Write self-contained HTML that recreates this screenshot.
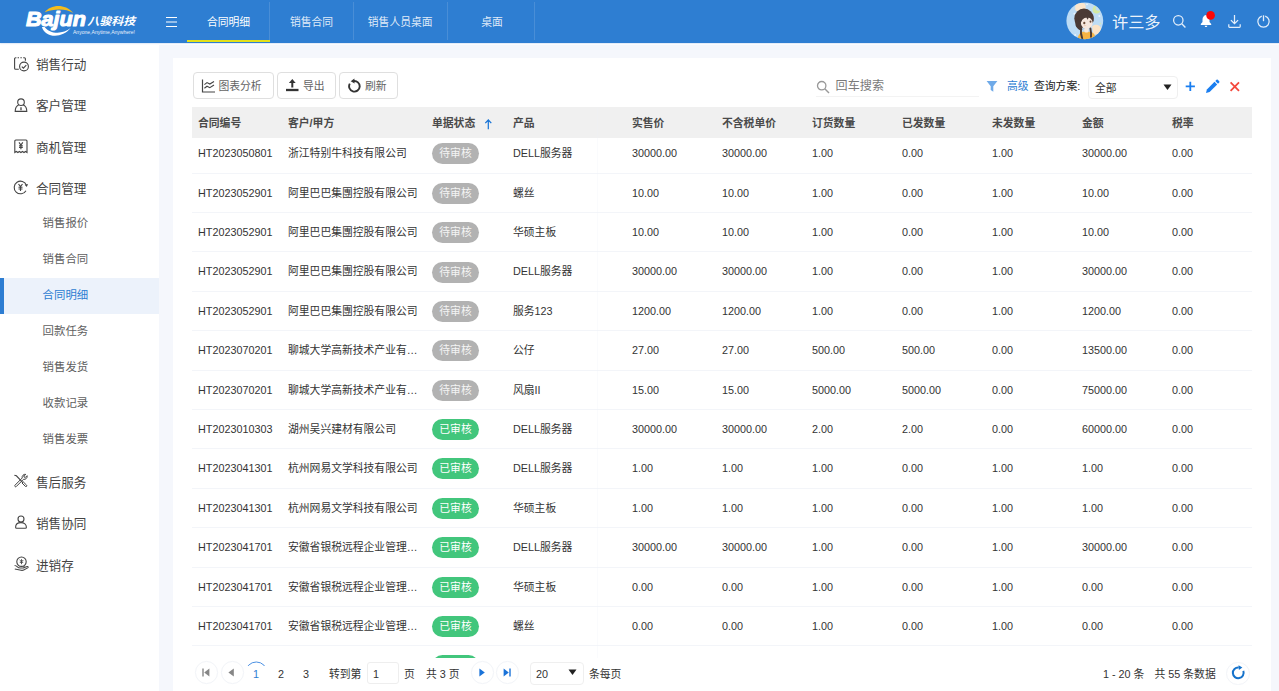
<!DOCTYPE html>
<html lang="zh-CN">
<head>
<meta charset="utf-8">
<title>合同明细</title>
<style>
*{box-sizing:border-box;margin:0;padding:0}
html,body{width:1279px;height:691px;overflow:hidden;background:#fff}
body{font-family:"Liberation Sans","Noto Sans CJK SC",sans-serif;font-size:10.8px;color:#333;position:relative}
.abs{position:absolute}
#hd{position:absolute;left:0;top:0;width:1279px;height:43.300px;background:#2e7ed2;box-shadow:0 .5px 1.500px rgba(40,110,200,.35);z-index:5}
.tab{position:absolute;top:0;height:43px;line-height:44.200px;text-align:center;color:rgba(255,255,255,.86);font-size:10.8px}
.tab.on{color:#fff}
.sep{position:absolute;top:2px;width:1px;height:38px;background:rgba(255,255,255,.13)}
#sb{position:absolute;left:0;top:43px;width:159px;height:648px;background:#fff}
.mi{position:absolute;left:36px;font-size:12.6px;color:#444;line-height:20px;height:20px;white-space:nowrap}
.si{position:absolute;left:42.600px;font-size:11.400px;color:#606060;line-height:20px;height:20px;white-space:nowrap}
.ico{position:absolute}
#ct{position:absolute;left:159px;top:44.600px;width:1120px;height:647px;background:#f5f7fc}
#pn{position:absolute;left:173.200px;top:58px;width:1097.900px;height:633px;background:#fff}
.btn{position:absolute;top:72px;height:27px;border:1px solid #dfdfdf;border-radius:4px;background:#fff;font-size:10.8px;color:#636363;line-height:27px;white-space:nowrap}
#th{position:absolute;left:192px;top:107px;width:1060px;height:31px;background:#f0f0f0}
#th span{position:absolute;top:0;line-height:33.600px;font-weight:bold;font-size:10.8px;color:#4a4a4a;white-space:nowrap}
#tb{position:absolute;left:192px;top:138px;width:1060px;height:520px;overflow:hidden}
#tbi{position:absolute;left:0;top:-3.7px;width:1060px}
.tr{position:relative;height:39.4px;border-bottom:1px solid #f3f5f9;white-space:nowrap}
.c{position:absolute;top:0;height:39.4px;line-height:39.6px;padding:0 6px;overflow:hidden;text-overflow:ellipsis;white-space:nowrap;font-size:10.8px;color:#333}
.c1{left:0;width:90px}.c2{left:90px;width:144px}.c3{left:234px;width:81px}.c4{left:315px;width:90px}.c5{left:405px;width:29px}.cn{width:90px}
.bd{display:inline-block;height:21px;line-height:21px;border-radius:11px;padding:0 7.3px;color:#fff;font-size:10.8px;vertical-align:middle;position:relative;top:-0.6px}
.bd.w{background:#b2b2b2;color:#f4f4f4}.bd.d{background:#42c67c}
#pg{position:absolute;left:174px;top:658px;width:1097px;height:33px;background:#fff}
.pt{position:absolute;top:663.500px;height:20px;line-height:20px;font-size:10.8px;color:#333;white-space:nowrap}
.cb{position:absolute;width:22.5px;height:22.5px;border:1px solid #f2f4f8;border-radius:50%;background:#fff}
</style>
</head>
<body>
<div id="hd">
  <svg class="abs" style="left:0;top:0" width="160" height="43" viewBox="0 0 160 43">
    <path d="M44.800 12.200C50 5.500 64 2.500 73.200 13C66 8.300 54 8.500 44.800 12.200Z" fill="#f5bd1b"/>
    <path d="M41.900 26.900C45 38 62 39 70.600 28.100C63 34.500 50 34.500 44.600 27Z" fill="#fff"/>
    <text x="26" y="25.6" font-family="Liberation Sans, sans-serif" font-weight="bold" font-style="italic" font-size="21" fill="#fff" stroke="#fff" stroke-width="1.1" stroke-linejoin="round" textLength="60" lengthAdjust="spacingAndGlyphs">Bajun</text>
    <text x="87.300" y="24.600" font-family="Noto Sans CJK SC, sans-serif" font-weight="bold" font-style="italic" font-size="10.800" fill="#fff" textLength="48" lengthAdjust="spacingAndGlyphs">八骏科技</text>
    <text x="73" y="33.8" font-family="Liberation Sans, sans-serif" font-size="4.6" fill="#e8f0fb" textLength="62" lengthAdjust="spacingAndGlyphs">Anyone,Anytime,Anywhere!</text>
  </svg>
  <svg class="abs" style="left:164.800px;top:15.500px" width="13" height="12" viewBox="0 0 13 12"><path d="M1 1.5h11M1 6h11M1 10.5h11" stroke="#fff" stroke-width="1.1" fill="none"/></svg>
  <div class="tab on" style="left:187px;width:83px">合同明细</div>
  <div class="abs" style="left:187px;top:40px;width:83px;height:2px;background:#e4e11a"></div>
  <div class="sep" style="left:269.400px"></div>
  <div class="tab" style="left:270px;width:83px">销售合同</div>
  <div class="sep" style="left:353px"></div>
  <div class="tab" style="left:353px;width:94.400px">销售人员桌面</div>
  <div class="sep" style="left:447.400px"></div>
  <div class="tab" style="left:448px;width:88px">桌面</div>
  <div class="sep" style="left:534px"></div>
  <!-- avatar -->
  <svg class="abs" style="left:1065.900px;top:1.900px" width="38" height="38" viewBox="0 0 38 38">
    <defs><clipPath id="av"><circle cx="18.8" cy="18.8" r="18.4"/></clipPath></defs>
    <g clip-path="url(#av)">
      <rect width="38" height="38" fill="#bddcf5"/>
      <circle cx="21" cy="2.300" r=".9" fill="#eaf4fc"/><circle cx="8.500" cy="11.800" r="1" fill="#eaf4fc"/><circle cx="33.400" cy="14" r="1" fill="#eaf4fc"/><circle cx="9.200" cy="33" r=".9" fill="#eaf4fc"/><circle cx="34.300" cy="21.500" r=".8" fill="#d6eeb4"/>
      <circle cx="30.500" cy="7.600" r="3.900" fill="#d3eaa2"/><circle cx="32.300" cy="6" r="2.700" fill="#bddcf5"/>
      <rect x="9.200" y="1" width="10.400" height="8.400" rx="3" fill="#fbe6cd"/>
      <path d="M26 24.500c2-2.200 6-2.400 8.200.200 1.600 2 .800 5.600-1.600 7.400l-5 .600z" fill="#fbe3c6"/>
      <path d="M11.600 38c.200-4.400 2.200-7.600 5.400-8.200h7.200c3.200.400 5 3.200 5.200 6.400L26 38z" fill="#f6b445"/>
      <rect x="18.300" y="26" width="4.200" height="4.600" rx="1.500" fill="#f7e9de"/>
      <ellipse cx="18" cy="16.400" rx="9.700" ry="9.800" fill="#4a3a35"/>
      <path d="M9.500 19c-.800 4 .800 7.400 4.600 9.200l2.400-.6-3-9z" fill="#4a3a35"/>
      <ellipse cx="20.800" cy="21" rx="5.900" ry="5.900" fill="#f6e8df"/>
      <path d="M12 15c3-5 11-6.400 15.400-.600l.200 5.600c-1.400-2.800-3-4-5-4.400l-.800 2.200-1.600-2.400c-3 .400-5 2.600-5.600 6.600l-2.200-1z" fill="#4a3a35"/>
      <ellipse cx="18.300" cy="21" rx="1.100" ry="1.300" fill="#6b4c3a"/><ellipse cx="24.500" cy="19.600" rx=".9" ry="1.200" fill="#6b4c3a"/>
      <ellipse cx="19" cy="23.600" rx="1.300" ry=".6" fill="#f4cdb5"/>
      <path d="M15 26.600c-.400 3.400 0 6.600 1.200 9.800M24.400 26.400c.600 2.800.800 5.600.600 8.400" stroke="#4a3a35" stroke-width="1.900" fill="none" stroke-linecap="round"/>
    </g>
  </svg>
  <div class="abs" style="left:1112px;top:9.600px;height:24px;line-height:24px;font-size:16.200px;color:rgba(255,255,255,.93);white-space:nowrap">许三多</div>
  <svg class="abs" style="left:1172px;top:14px" width="15" height="15" viewBox="0 0 15 15"><circle cx="6.300" cy="6.300" r="4.700" fill="none" stroke="#e3eefa" stroke-width="1.250"/><path d="M9.800 9.800L13.400 13.400" stroke="#e3eefa" stroke-width="1.350"/></svg>
  <svg class="abs" style="left:1199px;top:10px" width="18" height="20" viewBox="0 0 18 20"><path d="M7 5c-2.300.500-3.500 2.300-3.500 4.700v2.200L1.800 14v.900h10.400V14l-1.700-2.100V9.700c0-2.400-1.200-4.200-3.500-4.700z" fill="#fff"/><path d="M5.700 15.700h2.600c0 .800-.600 1.300-1.300 1.300s-1.300-.500-1.300-1.300z" fill="#fff"/><circle cx="11.600" cy="5.400" r="4.300" fill="#fb0606"/></svg>
  <svg class="abs" style="left:1227px;top:14px" width="15" height="15" viewBox="0 0 15 15"><path d="M7.500 1v8.600M3.900 6.100l3.600 3.600 3.600-3.600M1.800 10.200v2.400a.8.800 0 0 0 .8.800h9.800a.8.800 0 0 0 .8-.8v-2.400" fill="none" stroke="#e3eefa" stroke-width="1.250"/></svg>
  <svg class="abs" style="left:1256px;top:14px" width="15" height="15" viewBox="0 0 15 15"><path d="M5.800 2.100a5.700 5.700 0 1 0 3.400 0" fill="none" stroke="#e3eefa" stroke-width="1.250"/><path d="M7.500 1.300v5.900" stroke="#e3eefa" stroke-width="1.300"/></svg>
</div>

<div id="sb">
  <div class="abs" style="left:0;top:235px;width:159px;height:36px;background:#ecf2fb"></div>
  <div class="abs" style="left:0;top:235px;width:3.600px;height:36px;background:#2d7dd2"></div>
  <!-- icons -->
  <svg class="ico" style="left:13px;top:11.500px" width="17" height="17" viewBox="0 0 17 17"><path d="M5.800 14.200H2.600a1 1 0 0 1-1-1V3.800a1 1 0 0 1 1-1h.800" fill="none" stroke="#444" stroke-width="1.100"/><path d="M4.600 2.800h1.400M7.400 2.800h1.400M10.200 2.800h1.200a1 1 0 0 1 1 1v2" fill="none" stroke="#444" stroke-width="1.100"/><circle cx="11" cy="11.500" r="4.400" fill="#fff" stroke="#444" stroke-width="1.100"/><path d="M8.800 11.600l1.600 1.600 2.900-3.100" fill="none" stroke="#444" stroke-width="1.100"/></svg>
  <svg class="ico" style="left:13px;top:54px" width="17" height="17" viewBox="0 0 17 17"><circle cx="8" cy="5.200" r="3.300" fill="none" stroke="#444" stroke-width="1.100"/><path d="M5.800 7.800C3.400 9 2.200 11.400 2.200 14.400h11.600c0-3-1.200-5.400-3.600-6.600" fill="none" stroke="#444" stroke-width="1.100"/><path d="M8 10.200v3" stroke="#444" stroke-width="1.300"/></svg>
  <svg class="ico" style="left:13px;top:94.700px" width="17" height="17" viewBox="0 0 17 17"><path d="M1.800 14.500V3a1 1 0 0 1 1-1h10.200a1 1 0 0 1 1 1v11.500l-1.500-1-1.500 1-1.550-1-1.550 1-1.550-1-1.500 1-1.550-1z" fill="none" stroke="#444" stroke-width="1.100"/><path d="M6 4.300L7.900 7l1.900-2.700M7.900 7v4.200M6 7.700h3.800M6 9.400h3.800" fill="none" stroke="#444" stroke-width="1.150"/></svg>
  <svg class="ico" style="left:12.200px;top:136px" width="17" height="17" viewBox="0 0 17 17"><path d="M14.420 6.350A6.300 6.300 0 1 0 13.960 11.650" fill="none" stroke="#444" stroke-width="1.100"/><path d="M12.700 5.700l3.300-.700-1.200 3.100z" fill="#444"/><path d="M6.500 5L8.500 7.700l2-2.700M8.500 7.700v4.300M6.500 8.300h4M6.500 10h4" fill="none" stroke="#444" stroke-width="1.100"/></svg>
  <svg class="ico" style="left:12.300px;top:429.200px" width="17" height="17" viewBox="0 0 17 17"><path d="M2.400 3.200l2 .6 6 6.400" fill="none" stroke="#444" stroke-width="1.100"/><path d="M10 11l1.200-1.200 3.400 3.400a.85.85 0 0 1-1.200 1.200z" fill="none" stroke="#444" stroke-width="1"/><path d="M13.800 2.400a3 3 0 0 0-3.600 3.600L3 13.200a.9.900 0 0 0 1.300 1.300l7.200-7.200a3 3 0 0 0 3.600-3.600l-1.700 1.700-1.300-.3-.3-1.300z" fill="none" stroke="#444" stroke-width="1"/></svg>
  <svg class="ico" style="left:13.200px;top:471.300px" width="17" height="17" viewBox="0 0 17 17"><circle cx="8" cy="5" r="3" fill="none" stroke="#444" stroke-width="1.100"/><path d="M2.600 13.200c0-2.800 2.200-4.600 5.400-4.600s5.400 1.800 5.400 4.600c0 .600-.400 1-1 1H3.600c-.600 0-1-.400-1-1z" fill="none" stroke="#444" stroke-width="1.100"/></svg>
  <svg class="ico" style="left:13px;top:511.800px" width="17" height="17" viewBox="0 0 17 17"><circle cx="8.500" cy="6.700" r="4.700" fill="none" stroke="#444" stroke-width="1.100"/><path d="M8.500 4.200v5M6.700 5l1.800 1.800L10.300 5M6.800 7.300h3.400" fill="none" stroke="#444" stroke-width=".9"/><path d="M1.600 10.400c1 0 2 .5 2.800 1.400.8.900 1.700 1.200 2.900 1.200h3.200c1 0 1-1.400 0-1.400M10.600 12.800l3.600-1.300c.9-.3 1.400.9.500 1.400l-4 2.100c-.8.400-1.600.5-2.600.3L1.800 14" fill="none" stroke="#444" stroke-width="1.050"/></svg>
  <div class="mi" style="top:11.8px">销售行动</div>
  <div class="mi" style="top:53.2px">客户管理</div>
  <div class="mi" style="top:94.6px">商机管理</div>
  <div class="mi" style="top:136.0px">合同管理</div>
  <div class="si" style="top:169.8px">销售报价</div>
  <div class="si" style="top:205.8px">销售合同</div>
  <div class="si" style="top:241.8px;color:#2d7dd2">合同明细</div>
  <div class="si" style="top:277.8px">回款任务</div>
  <div class="si" style="top:313.8px">销售发货</div>
  <div class="si" style="top:349.8px">收款记录</div>
  <div class="si" style="top:385.8px">销售发票</div>
  <div class="mi" style="top:429.8px">售后服务</div>
  <div class="mi" style="top:471.2px">销售协同</div>
  <div class="mi" style="top:512.6px">进销存</div>
</div>

<div id="ct"></div>
<div id="pn"></div>

<!-- toolbar -->
<div class="btn" style="left:193px;width:81px"><svg class="abs" style="left:6.500px;top:5.500px" width="15" height="14" viewBox="0 0 15 14"><path d="M1.500 .500v12.500h12.500" fill="none" stroke="#444" stroke-width="1.200"/><path d="M3.400 5.600l2.600-2 2.800 1.500 4.200-2.600M3.400 9.200l2.600-2 2.800 1.500 4.200-2.600" fill="none" stroke="#444" stroke-width="1.150"/></svg><span class="abs" style="left:24.400px;top:0">图表分析</span></div>
<div class="btn" style="left:277px;width:59px"><svg class="abs" style="left:6.700px;top:5px" width="15" height="15" viewBox="0 0 15 15"><path d="M7.300 1L3.900 5.100h2.400v4.300h2V5.100h2.400z" fill="#333"/><path d="M1 12h12.500" stroke="#333" stroke-width="2.300"/></svg><span class="abs" style="left:25px;top:0">导出</span></div>
<div class="btn" style="left:339px;width:59px"><svg class="abs" style="left:7px;top:5px" width="15" height="15" viewBox="0 0 15 15"><path d="M6.480 3.080A5.300 5.300 0 1 1 2.810 5.650" fill="none" stroke="#333" stroke-width="1.900"/><path d="M3.700 3.300L7.400 .400l.200 5.200z" fill="#333"/></svg><span class="abs" style="left:25px;top:0">刷新</span></div>

<svg class="abs" style="left:816px;top:79.600px" width="14" height="14" viewBox="0 0 14 14"><circle cx="5.700" cy="5.700" r="4.200" fill="none" stroke="#999" stroke-width="1.300"/><path d="M8.800 8.800l4.200 4.200" stroke="#999" stroke-width="1.400"/></svg>
<div class="abs" style="left:835.600px;top:76.300px;height:20px;line-height:20px;font-size:12.100px;color:#7a7a7a;white-space:nowrap">回车搜索</div>
<div class="abs" style="left:816px;top:96px;width:163px;height:1px;background:#f3f3f3"></div>
<svg class="abs" style="left:986px;top:80px" width="12" height="13" viewBox="0 0 12 13"><path d="M.600 1h10.800L7.300 6.200v5.600L4.700 10V6.200z" fill="#6faae8"/></svg>
<div class="abs" style="left:1007px;top:76px;height:20px;line-height:20px;color:#2d7dd2;white-space:nowrap">高级</div>
<div class="abs" style="left:1034px;top:76px;height:20px;line-height:20px;color:#222;white-space:nowrap">查询方案:</div>
<div class="abs" style="left:1088px;top:76px;width:90px;height:22.500px;border:1px solid #efefef;border-radius:4px;background:#fff"></div>
<div class="abs" style="left:1095px;top:78px;height:20px;line-height:20px;color:#333;white-space:nowrap">全部</div>
<svg class="abs" style="left:1162.600px;top:83.800px" width="9" height="7" viewBox="0 0 9 7"><path d="M.500 .500h8L4.500 6z" fill="#222"/></svg>
<svg class="abs" style="left:1184.500px;top:81.300px" width="11" height="11" viewBox="0 0 11 11"><path d="M5.300 .800v9.200M.700 5.400h9.200" stroke="#1a7ef0" stroke-width="1.800"/></svg>
<svg class="abs" style="left:1205px;top:79px" width="15" height="15" viewBox="0 0 15 15"><path d="M1 14l.900-3.600 7.600-7.600 2.700 2.700-7.600 7.600z" fill="#1a7ef0"/><path d="M10.300 2l1.200-1.200a.9.900 0 0 1 1.300 0l1.400 1.400a.9.900 0 0 1 0 1.300L13 4.700z" fill="#1a7ef0"/></svg>
<svg class="abs" style="left:1229px;top:81px" width="11" height="11" viewBox="0 0 11 11"><path d="M1.600 1.400l8.400 8.400M10 1.400l-8.400 8.400" stroke="#f4483c" stroke-width="1.800"/></svg>

<!-- table -->
<div id="tb"><div id="tbi">
<div class="tr"><div class="c c1">HT2023050801</div><div class="c c2">浙江特别牛科技有限公司</div><div class="c c3"><span class="bd w">待审核</span></div><div class="c c4">DELL服务器</div><div class="c c5"></div><div class="c cn" style="left:434px">30000.00</div><div class="c cn" style="left:524px">30000.00</div><div class="c cn" style="left:614px">1.00</div><div class="c cn" style="left:704px">0.00</div><div class="c cn" style="left:794px">1.00</div><div class="c cn" style="left:884px">30000.00</div><div class="c cn" style="left:974px">0.00</div></div>
<div class="tr"><div class="c c1">HT2023052901</div><div class="c c2">阿里巴巴集團控股有限公司</div><div class="c c3"><span class="bd w">待审核</span></div><div class="c c4">螺丝</div><div class="c c5"></div><div class="c cn" style="left:434px">10.00</div><div class="c cn" style="left:524px">10.00</div><div class="c cn" style="left:614px">1.00</div><div class="c cn" style="left:704px">0.00</div><div class="c cn" style="left:794px">1.00</div><div class="c cn" style="left:884px">10.00</div><div class="c cn" style="left:974px">0.00</div></div>
<div class="tr"><div class="c c1">HT2023052901</div><div class="c c2">阿里巴巴集團控股有限公司</div><div class="c c3"><span class="bd w">待审核</span></div><div class="c c4">华硕主板</div><div class="c c5"></div><div class="c cn" style="left:434px">10.00</div><div class="c cn" style="left:524px">10.00</div><div class="c cn" style="left:614px">1.00</div><div class="c cn" style="left:704px">0.00</div><div class="c cn" style="left:794px">1.00</div><div class="c cn" style="left:884px">10.00</div><div class="c cn" style="left:974px">0.00</div></div>
<div class="tr"><div class="c c1">HT2023052901</div><div class="c c2">阿里巴巴集團控股有限公司</div><div class="c c3"><span class="bd w">待审核</span></div><div class="c c4">DELL服务器</div><div class="c c5"></div><div class="c cn" style="left:434px">30000.00</div><div class="c cn" style="left:524px">30000.00</div><div class="c cn" style="left:614px">1.00</div><div class="c cn" style="left:704px">0.00</div><div class="c cn" style="left:794px">1.00</div><div class="c cn" style="left:884px">30000.00</div><div class="c cn" style="left:974px">0.00</div></div>
<div class="tr"><div class="c c1">HT2023052901</div><div class="c c2">阿里巴巴集團控股有限公司</div><div class="c c3"><span class="bd w">待审核</span></div><div class="c c4">服务123</div><div class="c c5"></div><div class="c cn" style="left:434px">1200.00</div><div class="c cn" style="left:524px">1200.00</div><div class="c cn" style="left:614px">1.00</div><div class="c cn" style="left:704px">0.00</div><div class="c cn" style="left:794px">1.00</div><div class="c cn" style="left:884px">1200.00</div><div class="c cn" style="left:974px">0.00</div></div>
<div class="tr"><div class="c c1">HT2023070201</div><div class="c c2">聊城大学高新技术产业有限公司</div><div class="c c3"><span class="bd w">待审核</span></div><div class="c c4">公仔</div><div class="c c5"></div><div class="c cn" style="left:434px">27.00</div><div class="c cn" style="left:524px">27.00</div><div class="c cn" style="left:614px">500.00</div><div class="c cn" style="left:704px">500.00</div><div class="c cn" style="left:794px">0.00</div><div class="c cn" style="left:884px">13500.00</div><div class="c cn" style="left:974px">0.00</div></div>
<div class="tr"><div class="c c1">HT2023070201</div><div class="c c2">聊城大学高新技术产业有限公司</div><div class="c c3"><span class="bd w">待审核</span></div><div class="c c4">风扇II</div><div class="c c5"></div><div class="c cn" style="left:434px">15.00</div><div class="c cn" style="left:524px">15.00</div><div class="c cn" style="left:614px">5000.00</div><div class="c cn" style="left:704px">5000.00</div><div class="c cn" style="left:794px">0.00</div><div class="c cn" style="left:884px">75000.00</div><div class="c cn" style="left:974px">0.00</div></div>
<div class="tr"><div class="c c1">HT2023010303</div><div class="c c2">湖州吴兴建材有限公司</div><div class="c c3"><span class="bd d">已审核</span></div><div class="c c4">DELL服务器</div><div class="c c5"></div><div class="c cn" style="left:434px">30000.00</div><div class="c cn" style="left:524px">30000.00</div><div class="c cn" style="left:614px">2.00</div><div class="c cn" style="left:704px">2.00</div><div class="c cn" style="left:794px">0.00</div><div class="c cn" style="left:884px">60000.00</div><div class="c cn" style="left:974px">0.00</div></div>
<div class="tr"><div class="c c1">HT2023041301</div><div class="c c2">杭州网易文学科技有限公司</div><div class="c c3"><span class="bd d">已审核</span></div><div class="c c4">DELL服务器</div><div class="c c5"></div><div class="c cn" style="left:434px">1.00</div><div class="c cn" style="left:524px">1.00</div><div class="c cn" style="left:614px">1.00</div><div class="c cn" style="left:704px">0.00</div><div class="c cn" style="left:794px">1.00</div><div class="c cn" style="left:884px">1.00</div><div class="c cn" style="left:974px">0.00</div></div>
<div class="tr"><div class="c c1">HT2023041301</div><div class="c c2">杭州网易文学科技有限公司</div><div class="c c3"><span class="bd d">已审核</span></div><div class="c c4">华硕主板</div><div class="c c5"></div><div class="c cn" style="left:434px">1.00</div><div class="c cn" style="left:524px">1.00</div><div class="c cn" style="left:614px">1.00</div><div class="c cn" style="left:704px">0.00</div><div class="c cn" style="left:794px">1.00</div><div class="c cn" style="left:884px">1.00</div><div class="c cn" style="left:974px">0.00</div></div>
<div class="tr"><div class="c c1">HT2023041701</div><div class="c c2">安徽省银税远程企业管理有限公司</div><div class="c c3"><span class="bd d">已审核</span></div><div class="c c4">DELL服务器</div><div class="c c5"></div><div class="c cn" style="left:434px">30000.00</div><div class="c cn" style="left:524px">30000.00</div><div class="c cn" style="left:614px">1.00</div><div class="c cn" style="left:704px">0.00</div><div class="c cn" style="left:794px">1.00</div><div class="c cn" style="left:884px">30000.00</div><div class="c cn" style="left:974px">0.00</div></div>
<div class="tr"><div class="c c1">HT2023041701</div><div class="c c2">安徽省银税远程企业管理有限公司</div><div class="c c3"><span class="bd d">已审核</span></div><div class="c c4">华硕主板</div><div class="c c5"></div><div class="c cn" style="left:434px">0.00</div><div class="c cn" style="left:524px">0.00</div><div class="c cn" style="left:614px">1.00</div><div class="c cn" style="left:704px">0.00</div><div class="c cn" style="left:794px">1.00</div><div class="c cn" style="left:884px">0.00</div><div class="c cn" style="left:974px">0.00</div></div>
<div class="tr"><div class="c c1">HT2023041701</div><div class="c c2">安徽省银税远程企业管理有限公司</div><div class="c c3"><span class="bd d">已审核</span></div><div class="c c4">螺丝</div><div class="c c5"></div><div class="c cn" style="left:434px">0.00</div><div class="c cn" style="left:524px">0.00</div><div class="c cn" style="left:614px">1.00</div><div class="c cn" style="left:704px">0.00</div><div class="c cn" style="left:794px">1.00</div><div class="c cn" style="left:884px">0.00</div><div class="c cn" style="left:974px">0.00</div></div>
<div class="tr"><div class="c c1">HT2023041701</div><div class="c c2">安徽省银税远程企业管理有限公司</div><div class="c c3"><span class="bd d">已审核</span></div><div class="c c4">公仔</div><div class="c c5"></div><div class="c cn" style="left:434px">0.00</div><div class="c cn" style="left:524px">0.00</div><div class="c cn" style="left:614px">1.00</div><div class="c cn" style="left:704px">0.00</div><div class="c cn" style="left:794px">1.00</div><div class="c cn" style="left:884px">0.00</div><div class="c cn" style="left:974px">0.00</div></div>
</div></div>
<div id="th">
  <span style="left:6px">合同编号</span><span style="left:96px">客户/甲方</span><span style="left:240px">单据状态</span>
  <svg class="abs" style="left:292px;top:11.500px" width="9" height="11" viewBox="0 0 9 11"><path d="M4.300 1.200v9M1.300 4.200l3-3.200 3 3.200" fill="none" stroke="#1673d6" stroke-width="1.200"/></svg>
  <span style="left:321px">产品</span><span style="left:440px">实售价</span><span style="left:530px">不含税单价</span><span style="left:620px">订货数量</span><span style="left:710px">已发数量</span><span style="left:800px">未发数量</span><span style="left:890px">金额</span><span style="left:980px">税率</span>
</div>
<div class="abs" style="left:597px;top:107px;width:1px;height:551px;background:rgba(238,241,247,.3)"></div>

<!-- pager -->
<div id="pg"></div>
<div class="cb" style="left:195px;top:661px"></div>
<svg class="abs" style="left:202px;top:668px" width="8" height="9" viewBox="0 0 8 9"><path d="M1 .500v8" stroke="#868686" stroke-width="1.400"/><path d="M7.400 .600v7.800L2.200 4.500z" fill="#868686"/></svg>
<div class="cb" style="left:221px;top:661px"></div>
<svg class="abs" style="left:227.300px;top:668px" width="8" height="9" viewBox="0 0 8 9"><path d="M6.800 .600v7.800L1.400 4.500z" fill="#868686"/></svg>
<svg class="abs" style="left:245px;top:660px" width="23" height="5.700" viewBox="0 0 23 5.700"><circle cx="11.300" cy="12.800" r="10.800" fill="none" stroke="#4a90e2" stroke-width="1"/></svg>
<div class="pt" style="left:253px;color:#2d7dd2">1</div>
<div class="pt" style="left:278px">2</div>
<div class="pt" style="left:303px">3</div>
<div class="pt" style="left:329px">转到第</div>
<div class="abs" style="left:366.500px;top:662.300px;width:32.500px;height:22.200px;border:1px solid #eee;border-radius:3px"></div>
<div class="pt" style="left:373px">1</div>
<div class="pt" style="left:404px">页</div>
<div class="pt" style="left:426px">共 3 页</div>
<div class="cb" style="left:471px;top:661px"></div>
<svg class="abs" style="left:478px;top:668px" width="8" height="9" viewBox="0 0 8 9"><path d="M1.400 .600v7.800L6.800 4.500z" fill="#1a73d9"/></svg>
<div class="cb" style="left:496px;top:661px"></div>
<svg class="abs" style="left:503px;top:668px" width="8" height="9" viewBox="0 0 8 9"><path d="M.600 .600v7.800L5.800 4.500z" fill="#1a73d9"/><path d="M7 .500v8" stroke="#1a73d9" stroke-width="1.400"/></svg>
<div class="abs" style="left:530px;top:662px;width:54px;height:22.500px;border:1px solid #efefef;border-radius:4px"></div>
<div class="pt" style="left:536px">20</div>
<svg class="abs" style="left:568px;top:669px" width="9" height="7" viewBox="0 0 9 7"><path d="M.500 .500h8L4.500 6z" fill="#222"/></svg>
<div class="pt" style="left:589px">条每页</div>
<div class="pt" style="left:1103px">1 - 20 条</div>
<div class="pt" style="left:1154.500px">共 55 条数据</div>
<div class="cb" style="left:1226.400px;top:661.800px;width:23.500px;height:23.500px"></div>
<svg class="abs" style="left:1231px;top:665px" width="15" height="15" viewBox="0 0 15 15"><path d="M7.720 2.420A5.400 5.400 0 1 0 12.320 5.950" fill="none" stroke="#1572cb" stroke-width="2"/><path d="M7.500 .300l3.900 2.200-3.500 2.500z" fill="#1572cb"/></svg>
</body>
</html>
